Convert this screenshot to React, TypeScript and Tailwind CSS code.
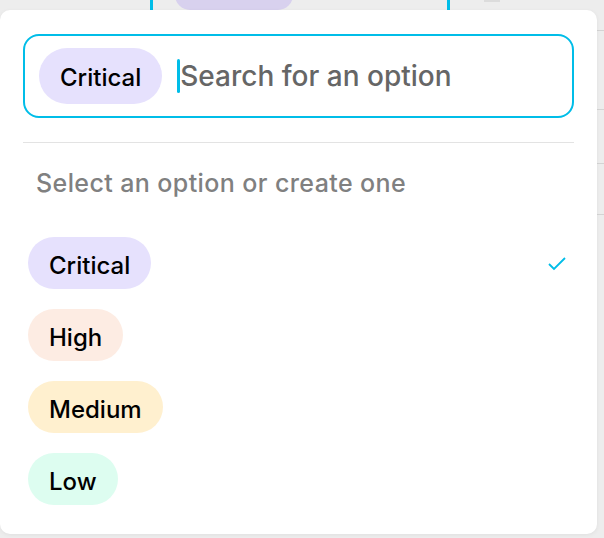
import React from "react";

const OPTIONS = [
  { label: "Critical", bg: "bg-[#e6e1fd]", selected: true },
  { label: "High", bg: "bg-[#fdece3]", selected: false },
  { label: "Medium", bg: "bg-[#fff0cf]", selected: false },
  { label: "Low", bg: "bg-[#ddfdf0]", selected: false },
];

export default function App() {
  return (
    <div
      className="relative w-[604px] h-[538px] overflow-hidden bg-[#ededed]"
      style={{ fontFamily: "Inter, 'Noto Sans', sans-serif" }}
    >
      {/* table rows behind the popover */}
      <div className="flex flex-col">
        <div className="flex h-[31px] overflow-hidden border-b border-[#d4d4d4]">
          <div className="w-[150px]" />
          <div className="flex w-[300px] border-x-[3px] border-[#00bde8] pl-[22px]">
            <span className="mt-[-20px] h-[30px] w-[118px] rounded-full bg-[#d8d1ee]" />
          </div>
          <div className="pl-[34px]">
            <span className="block h-[2px] w-[16px] bg-[#dcdcdc]" />
          </div>
        </div>
        <div className="h-[79px] border-b border-[#d4d4d4]" />
        <div className="h-[54px] border-b border-[#d4d4d4]" />
        <div className="h-[51px] border-b border-[#d4d4d4]" />
      </div>

      {/* popover */}
      <div className="absolute left-0 top-[10px] w-[597px] h-[524px] rounded-[10px] bg-white shadow-[0_1px_4px_rgba(0,0,0,0.06)]">
        <div className="px-[23px] pt-[24px]">
          <div className="flex h-[84px] items-center rounded-[16px] border-2 border-[#00bde8] pl-[14px]">
            <span className="flex h-[56px] items-center rounded-full bg-[#e6e1fd] px-[21px] pt-[4px] text-[24px] font-medium text-black">
              Critical
            </span>
            <span className="ml-[15px] h-[34px] w-[3px] rounded-sm bg-[#00bde8]" />
            <span className="text-[28px] font-medium text-[#666666]">Search for an option</span>
          </div>
          <div className="mt-[24px] h-px bg-[#e3e3e3]" />
        </div>
        <div className="pl-[36px] pt-[22px] text-[25px] leading-[36px] font-medium tracking-[0.4px] text-[#808080]">
          Select an option or create one
        </div>
        <div className="mt-[36px] flex flex-col gap-[20px] px-[28px]">
          {OPTIONS.map((o) => (
            <div key={o.label} className="flex items-center justify-between">
              <span
                className={`flex h-[52px] items-center rounded-full ${o.bg} px-[21px] pt-[6px] text-[24px] font-medium text-black`}
              >
                {o.label}
              </span>
              {o.selected && (
                <svg width="20" height="16" viewBox="0 0 20 16" className="mr-[2px]">
                  <path d="M2 9 L7 14 L18 3" fill="none" stroke="#00bde8" strokeWidth="1.8" />
                </svg>
              )}
            </div>
          ))}
        </div>
      </div>
    </div>
  );
}
